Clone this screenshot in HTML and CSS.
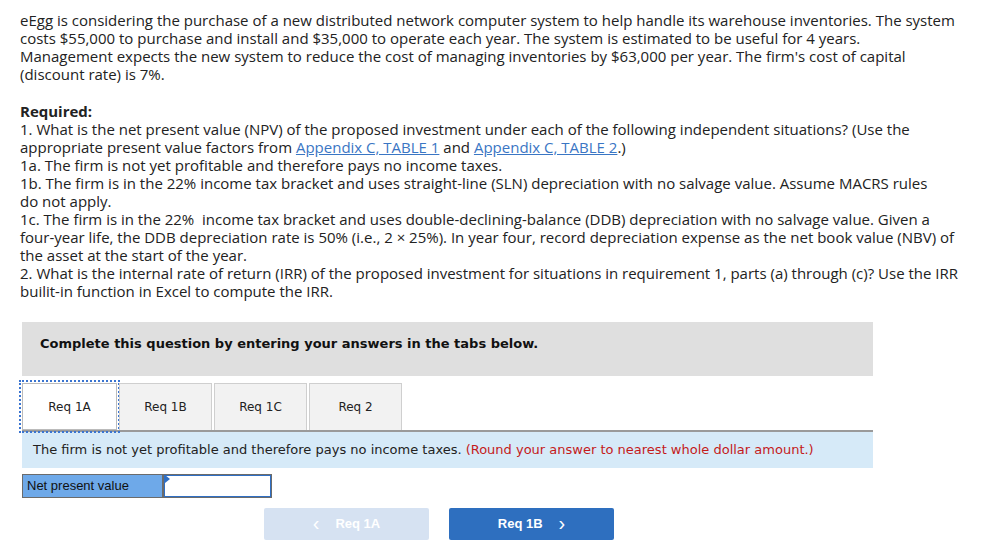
FILE: index.html
```html
<!DOCTYPE html>
<html>
<head>
<meta charset="utf-8">
<link rel="stylesheet" href="styles.css">
</head>
<body>
<div class="page">
  <p class="intro">eEgg is considering the purchase of a new distributed network computer system to help handle its warehouse inventories. The system<br>costs $55,000 to purchase and install and $35,000 to operate each year. The system is estimated to be useful for 4 years.<br>Management expects the new system to reduce the cost of managing inventories by $63,000 per year. The firm's cost of capital<br>(discount rate) is 7%.</p>
  <div class="required">
    <p class="req-title">Required:</p>
    <p>1. What is the net present value (NPV) of the proposed investment under each of the following independent situations? (Use the<br>appropriate present value factors from <a href="#">Appendix C, TABLE 1</a> and <a href="#">Appendix C, TABLE 2</a>.)</p>
    <p>1a. The firm is not yet profitable and therefore pays no income taxes.</p>
    <p>1b. The firm is in the 22% income tax bracket and uses straight-line (SLN) depreciation with no salvage value. Assume MACRS rules<br>do not apply.</p>
    <p>1c. The firm is in the 22%&nbsp; income tax bracket and uses double-declining-balance (DDB) depreciation with no salvage value. Given a<br>four-year life, the DDB depreciation rate is 50% (i.e., 2 × 25%). In year four, record depreciation expense as the net book value (NBV) of<br>the asset at the start of the year.</p>
    <p>2. What is the internal rate of return (IRR) of the proposed investment for situations in requirement 1, parts (a) through (c)? Use the IRR<br>builit-in function in Excel to compute the IRR.</p>
  </div>

  <div class="question">
    <div class="banner">Complete this question by entering your answers in the tabs below.</div>
    <div class="tabs">
      <div class="tab active">Req 1A</div>
      <div class="tab">Req 1B</div>
      <div class="tab">Req 1C</div>
      <div class="tab">Req 2</div>
    </div>
    <div class="info">The firm is not yet profitable and therefore pays no income taxes. <span class="note">(Round your answer to nearest whole dollar amount.)</span></div>
    <div class="answer">
      <div class="label">Net present value</div>
      <div class="input"><span class="flag"></span></div>
    </div>
    <div class="nav">
      <div class="btn prev"><span class="chev">&lsaquo;</span>Req 1A</div>
      <div class="btn next">Req 1B<span class="chev">&rsaquo;</span></div>
    </div>
  </div>
</div>
</body>
</html>
```
FILE: styles.css
```css
html, body {
  margin: 0;
  padding: 0;
  background: #fff;
}
.page {
  padding: 11px 0 0 20px;
  width: 965px;
  font-family: "Open Sans", "Liberation Sans", sans-serif;
  font-size: 15px;
  line-height: 18px;
  color: #222;
}
p {
  margin: 0;
}
.intro {
  margin-bottom: 19px;
}
.req-title {
  font-weight: bold;
}
.required a {
  color: #3a76c4;
  text-decoration: underline;
}
.question {
  margin-top: 22px;
  margin-left: 2px;
  width: 851px;
  font-family: "DejaVu Sans", Verdana, sans-serif;
}
.banner {
  background: #dfdfdf;
  height: 54px;
  box-sizing: border-box;
  padding: 0 0 10px 18px;
  display: flex;
  align-items: center;
  font-weight: bold;
  font-size: 13px;
  line-height: 16px;
  color: #111;
}
.tabs {
  display: flex;
  margin-top: 7px;
  border-bottom: 2px solid #9a9a9a;
  height: 47px;
  gap: 2px;
}
.tab {
  width: 93px;
  height: 47px;
  box-sizing: border-box;
  border: 1px solid #cfcfcf;
  border-bottom: none;
  background: #f2f2f2;
  display: flex;
  align-items: center;
  justify-content: center;
  font-size: 12px;
  line-height: 16px;
  color: #222;
}
.tab.active {
  background: #fff;
  width: 95px;
  border: 1px solid #bbb;
  outline: 2px dotted #3a74d0;
  outline-offset: 1px;
}
.info {
  background: #d6eaf8;
  height: 36px;
  display: flex;
  align-items: center;
  padding-left: 11px;
  font-size: 13px;
  line-height: 16px;
  color: #222;
}
.note {
  color: #c41b1b;
  margin-left: 4px;
}
.answer {
  display: flex;
  margin-top: 6px;
  height: 24px;
}
.label {
  width: 140px;
  box-sizing: border-box;
  background: #6ea9e9;
  border: 1px solid #6b6b6b;
  border-right: none;
  font-family: "Liberation Sans", Arial, sans-serif;
  font-size: 13px;
  color: #111;
  display: flex;
  align-items: center;
  padding-left: 4px;
}
.input {
  position: relative;
  width: 110px;
  box-sizing: border-box;
  border: 1px solid #6b6b6b;
  border-left: 2px solid #6b6b6b;
  background: #fff;
  box-shadow: inset 0 0 0 1px #2f6fc4;
}
.flag {
  position: absolute;
  left: 1px;
  top: 0;
  width: 0;
  height: 0;
  border-top: 4px solid transparent;
  border-bottom: 4px solid transparent;
  border-left: 5px solid #2f6fc4;
}
.nav {
  display: flex;
  gap: 20px;
  margin-top: 10px;
  margin-left: 242px;
}
.btn {
  width: 165px;
  height: 32px;
  border-radius: 2px;
  display: flex;
  align-items: center;
  justify-content: center;
  font-family: "Liberation Sans", Arial, sans-serif;
  font-weight: bold;
  font-size: 13px;
  color: #fff;
}
.btn.prev {
  background: #d6e2f2;
}
.btn.next {
  background: #2e6fbf;
}
.chev {
  font-size: 20px;
  font-weight: normal;
  line-height: 1;
  margin: -3px 0 0;
}
.prev .chev {
  margin-right: 16px;
}
.next .chev {
  margin-left: 16px;
}
```
